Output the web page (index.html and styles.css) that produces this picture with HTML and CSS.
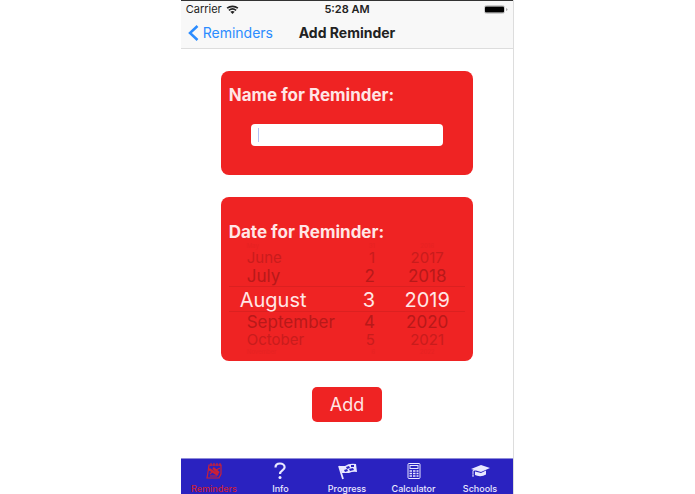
FILE: index.html
```html
<!DOCTYPE html>
<html lang="en">
<head>
    <meta charset="UTF-8">
    <meta name="viewport" content="width=device-width, initial-scale=1.0">
    <title>Add Reminder</title>
    <link rel="stylesheet" href="styles.css">
</head>
<body>
    <div class="phone">
        <header class="top">
            <div class="status">
                <div class="carrier">
                    <span>Carrier</span>
                    <svg class="wifi" viewBox="0 0 14 10" aria-hidden="true">
                        <path d="M1 3.6a9.5 9.5 0 0 1 12 0M3 6a6.2 6.2 0 0 1 8 0" fill="none" stroke="currentColor" stroke-width="1.8"/>
                        <path d="M4.6 7.6a3.8 3.8 0 0 1 4.8 0L7 10z" fill="currentColor"/>
                    </svg>
                </div>
                <span class="time">5:28 AM</span>
                <svg class="battery" viewBox="0 0 24 9" aria-hidden="true">
                    <rect x="0.5" y="0.5" width="20" height="8" rx="2" fill="none" stroke="#ccc"/>
                    <rect x="1" y="1.5" width="19" height="6" rx="1" fill="#000"/>
                    <path d="M22 3v3q1.5-.5 1.5-1.5T22 3z" fill="#aaa"/>
                </svg>
            </div>
            <nav class="navbar">
                <a class="back" href="#">
                    <svg viewBox="0 0 11 16" aria-hidden="true"><path d="M9.5 1L2 8l7.5 7" fill="none" stroke="currentColor" stroke-width="2.5"/></svg>
                    Reminders
                </a>
                <h1>Add Reminder</h1>
            </nav>
        </header>

        <form class="content">
            <div class="card name-card">
                <label for="name">Name for Reminder:</label>
                <input id="name" class="name-input" type="text" autocomplete="off">
            </div>

            <div class="card date-card">
                <h2>Date for Reminder:</h2>
                <div class="picker">
                    <div class="wheel months" role="radiogroup" aria-label="Month">
                        <label class="edge"><input type="radio" name="month">May</label>
                        <label class="far"><input type="radio" name="month">June</label>
                        <label class="near"><input type="radio" name="month">July</label>
                        <label class="current"><input type="radio" name="month" checked>August</label>
                        <label class="near"><input type="radio" name="month">September</label>
                        <label class="far"><input type="radio" name="month">October</label>
                        <label class="edge"><input type="radio" name="month">November</label>
                    </div>
                    <div class="wheel days" role="radiogroup" aria-label="Day">
                        <label class="edge"><input type="radio" name="day">31</label>
                        <label class="far"><input type="radio" name="day">1</label>
                        <label class="near"><input type="radio" name="day">2</label>
                        <label class="current"><input type="radio" name="day" checked>3</label>
                        <label class="near"><input type="radio" name="day">4</label>
                        <label class="far"><input type="radio" name="day">5</label>
                        <label class="edge"><input type="radio" name="day">6</label>
                    </div>
                    <div class="wheel years" role="radiogroup" aria-label="Year">
                        <label class="edge"><input type="radio" name="year">2016</label>
                        <label class="far"><input type="radio" name="year">2017</label>
                        <label class="near"><input type="radio" name="year">2018</label>
                        <label class="current"><input type="radio" name="year" checked>2019</label>
                        <label class="near"><input type="radio" name="year">2020</label>
                        <label class="far"><input type="radio" name="year">2021</label>
                        <label class="edge"><input type="radio" name="year">2022</label>
                    </div>
                </div>
            </div>

            <button class="add" type="button">Add</button>
        </form>

        <nav class="tabs">
            <a class="active" href="#">
                <svg viewBox="0 0 20 18" aria-hidden="true">
                    <path d="M5 3h12v9l-2 4H3l1-6z" fill="none" stroke="currentColor" stroke-width="1.2"/>
                    <path d="M7 1v3M10 1v3M13 1v3M16 1v3M6 12l3-3M12 8l4-2M6 14h7" fill="none" stroke="currentColor" stroke-width="1.2"/>
                    <path d="M5 7l9 6M9 6l6 5" fill="none" stroke="currentColor" stroke-width="2.4"/>
                </svg>
                <span>Reminders</span>
            </a>
            <a href="#">
                <svg viewBox="0 0 20 18" aria-hidden="true">
                    <path d="M5.5 5.5C5.5 3 7.5 1.5 10 1.5s4.6 1.5 4.6 3.8C14.6 8.5 10 8.5 10 12" fill="none" stroke="currentColor" stroke-width="2.2"/>
                    <circle cx="10" cy="15.5" r="1.5" fill="currentColor"/>
                </svg>
                <span>Info</span>
            </a>
            <a href="#">
                <svg viewBox="0 0 20 18" aria-hidden="true">
                    <path d="M2 4l4 13" stroke="currentColor" stroke-width="1.8"/>
                    <path d="M2 4l6 0q4-3 11-2l1 8q-4-1-8 1H5z" fill="currentColor"/>
                    <path d="M9 5l3-1 1 2-3 1zM14 3l3 0 0 2-3 0zM12 7l4-1 1 2-4 1zM7 8l3-1 1 2-3 1z" fill="#2a22c0"/>
                </svg>
                <span>Progress</span>
            </a>
            <a href="#">
                <svg viewBox="0 0 20 18" aria-hidden="true">
                    <rect x="4" y="1.5" width="12" height="15" rx="1" fill="none" stroke="currentColor"/>
                    <rect x="6" y="3.5" width="8" height="3" fill="none" stroke="currentColor"/>
                    <path d="M5.5 9h2.5M9 9h2.5M12.5 9h2M5.5 11.5h2.5M9 11.5h2.5M12.5 11.5h2M5.5 14h2.5M9 14h2.5M12.5 14h2" stroke="currentColor" stroke-width="1.5"/>
                </svg>
                <span>Calculator</span>
            </a>
            <a href="#">
                <svg viewBox="0 0 20 18" aria-hidden="true">
                    <path d="M1 7l10-4 9 3-9 4z" fill="currentColor"/>
                    <path d="M5 9.5l6 1.500 5-2.500v4q-3 2-6 1.800T5 13z" fill="currentColor"/>
                    <path d="M10 6.500L3 8.500v4" fill="none" stroke="currentColor"/>
                    <path d="M2 14.500l1-2.500 1 2.500z" fill="currentColor"/>
                </svg>
                <span>Schools</span>
            </a>
        </nav>
    </div>
</body>
</html>
```

FILE: styles.css
```css
* {
    box-sizing: border-box;
}

body {
    margin: 0;
    background-color: #fff;
    font-family: Inter, "Liberation Sans", sans-serif;
    color: #222;
}

.phone {
    display: flex;
    flex-direction: column;
    width: 48%;
    min-height: 100vh;
    margin: 0 auto;
    border-right: 1px solid #ddd;
}

.top {
    background-color: #f8f8f8;
    border-top: 1px solid #333;
    border-bottom: 1px solid #ddd;
}

.status {
    display: grid;
    grid-template-columns: 1fr auto 1fr;
    align-items: center;
    height: 16px;
    padding: 0 5px;
    font-size: 11px;
}

.carrier {
    display: flex;
    align-items: center;
    gap: 4px;
}

.wifi {
    width: 13px;
    height: 9px;
}

.time {
    font-weight: 600;
}

.battery {
    width: 24px;
    height: 9px;
    justify-self: end;
}

.navbar {
    display: grid;
    grid-template-columns: 1fr auto 1fr;
    align-items: center;
    height: 31px;
    padding: 0 7px;
}

.back {
    display: flex;
    align-items: center;
    gap: 4px;
    font-size: 14px;
    color: #2b8cff;
    text-decoration: none;
}

.back svg {
    width: 11px;
    height: 16px;
}

h1 {
    margin: 0;
    font-size: 14px;
    font-weight: 700;
}

.content {
    flex: 1;
    display: flex;
    flex-direction: column;
    align-items: center;
    padding: 22px 40px;
}

.card {
    width: 100%;
    padding: 0 8px;
    border-radius: 8px;
    background-color: #ef2323;
    color: #ffe6e6;
}

.name-card {
    display: flex;
    flex-direction: column;
    padding-top: 14px;
    padding-bottom: 29px;
    margin-bottom: 22px;
}

.name-card > label,
h2 {
    margin: 0;
    font-size: 17px;
    line-height: 20px;
    font-weight: 700;
}

.name-input {
    height: 22px;
    margin: 19px 22px 0;
    padding: 0 8px;
    border: none;
    border-radius: 4px;
    outline: none;
    font: inherit;
    font-size: 14px;
    /* text cursor */
    background: linear-gradient(#b4c0f5, #b4c0f5) 7px 50% / 1px 14px no-repeat #fff;
}

.date-card {
    padding-top: 25px;
    padding-bottom: 5px;
    margin-bottom: 26px;
}

.picker {
    display: grid;
    grid-template-columns: 21fr 8fr 18fr;
}

.wheel {
    display: flex;
    flex-direction: column;
}

.wheel input {
    appearance: none;
    width: 0;
    height: 0;
    margin: 0;
    position: absolute;
}

.months label {
    padding-left: 18px;
}

.days {
    text-align: right;
}

.years {
    text-align: center;
}

.years label {
    padding-left: 14px;
}

.edge {
    height: 8px;
    line-height: 8px;
    font-size: 6px;
    color: #e62222;
}

.far {
    height: 16px;
    line-height: 16px;
    font-size: 15px;
    color: #c91c1c;
}

.near {
    height: 20px;
    line-height: 20px;
    font-size: 17px;
    color: #b81919;
}

.current {
    height: 26px;
    line-height: 26px;
    font-size: 20px;
    border-top: 1px solid #dc2020;
    border-bottom: 1px solid #dc2020;
}

.months .current {
    padding-left: 11px;
}

.add {
    height: 35px;
    padding: 0 18px;
    border: none;
    border-radius: 5px;
    background-color: #ef2323;
    color: #ffe6e6;
    font: inherit;
    font-size: 18px;
}

.tabs {
    display: grid;
    grid-template-columns: repeat(5, 1fr);
    height: 36px;
    border-top: 1px solid #8f8cd8;
    background-color: #2a22c0;
}

.tabs a {
    display: flex;
    flex-direction: column;
    align-items: center;
    justify-content: flex-end;
    gap: 4px;
    color: #e9e8ff;
    font-size: 9px;
    line-height: 10px;
    font-weight: 500;
    text-decoration: none;
}

.tabs svg {
    width: 20px;
    height: 18px;
}

.tabs .active {
    color: #cc2035;
}
```
